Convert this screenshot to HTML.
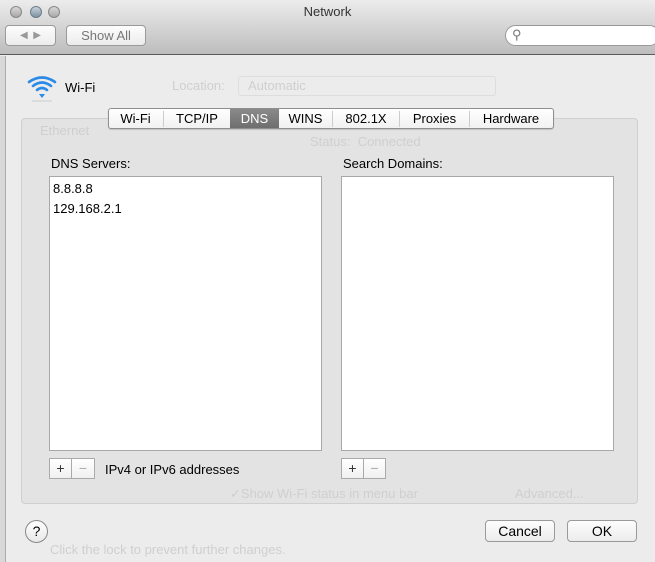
<!DOCTYPE html>
<html><head><style>
*{box-sizing:border-box;margin:0;padding:0}
body{width:655px;height:562px;overflow:hidden;background:#ececec;font-family:"Liberation Sans",sans-serif;font-size:13px;color:#000;position:relative}
.a{position:absolute}
.tb{left:0;top:0;width:655px;height:55px;background:linear-gradient(#ececec,#bdbdbd);border-bottom:1px solid #5a5a5a}
.btn{background:linear-gradient(#fdfdfd,#ececec);border:1px solid #9a9a9a;border-radius:4px;text-align:center}
.list{background:#fff;border:1px solid #a8a8a8}
.pm{background:linear-gradient(#fff,#f0f0f0);border:1px solid #aaa;height:21px;font-size:14px;text-align:center;line-height:19px;color:#333}
.ghost{color:#cfcfcf}
</style></head><body>
<div class="a tb"></div>
<div class="a" style="left:10px;top:6px;width:12px;height:12px;border-radius:50%;background:linear-gradient(#d8d8d8,#a8a8a8);border:1px solid #888"></div>
<div class="a" style="left:30px;top:6px;width:12px;height:12px;border-radius:50%;background:linear-gradient(#c6d3dc,#7e93a2);border:1px solid #6c7d88"></div>
<div class="a" style="left:48px;top:6px;width:12px;height:12px;border-radius:50%;background:linear-gradient(#d8d8d8,#a8a8a8);border:1px solid #888"></div>
<div class="a" style="left:0;top:4px;width:655px;text-align:center;font-size:13px;color:#333">Network</div>
<div class="a btn" style="left:5px;top:25px;width:51px;height:21px;color:#999;font-size:10px;line-height:19px">◀ &nbsp;▶</div>
<div class="a btn" style="left:66px;top:25px;width:80px;height:21px;color:#777;line-height:19px">Show All</div>
<div class="a" style="left:505px;top:25px;width:155px;height:21px;border-radius:11px;background:#fff;border:1px solid #999;color:#777;font-size:13px;padding-left:6px;line-height:18px">⚲</div>
<div class="a" style="left:0;top:56px;width:6px;height:506px;background:#d8d8d8;border-right:1px solid #aaa"></div>
<svg class="a" style="left:26px;top:74px" width="32" height="28" viewBox="0 0 32 28"><g fill="none" stroke="#2a8ae8" stroke-width="2.6" stroke-linecap="round"><path d="M3 8 Q16 -1 29 8"/><path d="M7 12 Q16 5 25 12"/><path d="M11 16 Q16 12 21 16"/></g><path d="M13 20 L16 24 L19 20 Z" fill="#2a8ae8"/><line x1="6" y1="27" x2="26" y2="27" stroke="#ccc"/></svg>
<div class="a" style="left:65px;top:80px">Wi-Fi</div>
<div class="a ghost" style="left:172px;top:78px">Location:</div>
<div class="a" style="left:238px;top:76px;width:258px;height:20px;border:1px solid #ddd;border-radius:3px"></div>
<div class="a ghost" style="left:248px;top:78px">Automatic</div>
<div class="a" style="left:21px;top:118px;width:617px;height:386px;background:#e3e3e3;border:1px solid #cfcfcf;border-radius:4px"></div>
<div class="a ghost" style="left:40px;top:123px">Ethernet</div>
<div class="a ghost" style="left:310px;top:134px">Status: &nbsp;Connected</div>
<div class="a ghost" style="left:230px;top:486px">✓Show Wi-Fi status in menu bar</div>
<div class="a ghost" style="left:515px;top:486px">Advanced...</div>
<div class="a" style="left:108px;top:108px;width:446px;height:21px;background:linear-gradient(#fff,#f1f1f1);border:1px solid #8f8f8f;border-radius:3px;box-shadow:0 1px 1px rgba(0,0,0,.15)"></div>
<div class="a" style="left:230px;top:109px;width:49px;height:19px;background:linear-gradient(#8a8a8a,#6e6e6e)"></div>
<div class="a" style="left:108px;top:111px;width:446px;height:16px;display:flex;font-size:13px;line-height:16px">
<span style="width:56px;text-align:center;border-right:1px solid #ccc">Wi-Fi</span>
<span style="width:66px;text-align:center">TCP/IP</span>
<span style="width:49px;text-align:center;color:#fff">DNS</span>
<span style="width:54px;text-align:center;border-right:1px solid #ccc">WINS</span>
<span style="width:67px;text-align:center;border-right:1px solid #ccc">802.1X</span>
<span style="width:70px;text-align:center;border-right:1px solid #ccc">Proxies</span>
<span style="width:82px;text-align:center">Hardware</span>
</div>
<div class="a" style="left:51px;top:156px">DNS Servers:</div>
<div class="a" style="left:343px;top:156px">Search Domains:</div>
<div class="a list" style="left:49px;top:176px;width:273px;height:275px"></div>
<div class="a list" style="left:341px;top:176px;width:273px;height:275px"></div>
<div class="a" style="left:53px;top:179px;line-height:20px">8.8.8.8<br>129.168.2.1</div>
<div class="a pm" style="left:49px;top:458px;width:23px">+</div>
<div class="a pm" style="left:71px;top:458px;width:24px;color:#aaa">−</div>
<div class="a" style="left:105px;top:462px">IPv4 or IPv6 addresses</div>
<div class="a pm" style="left:341px;top:458px;width:23px">+</div>
<div class="a pm" style="left:363px;top:458px;width:23px;color:#aaa">−</div>
<div class="a" style="left:25px;top:520px;width:23px;height:23px;border-radius:50%;background:linear-gradient(#fff,#e8e8e8);border:1px solid #888;text-align:center;line-height:21px;font-size:14px">?</div>
<div class="a ghost" style="left:50px;top:542px">Click the lock to prevent further changes.</div>
<div class="a btn" style="left:485px;top:520px;width:70px;height:22px;line-height:20px;font-size:14px">Cancel</div>
<div class="a btn" style="left:567px;top:520px;width:70px;height:22px;line-height:20px;font-size:14px">OK</div>
</body></html>
